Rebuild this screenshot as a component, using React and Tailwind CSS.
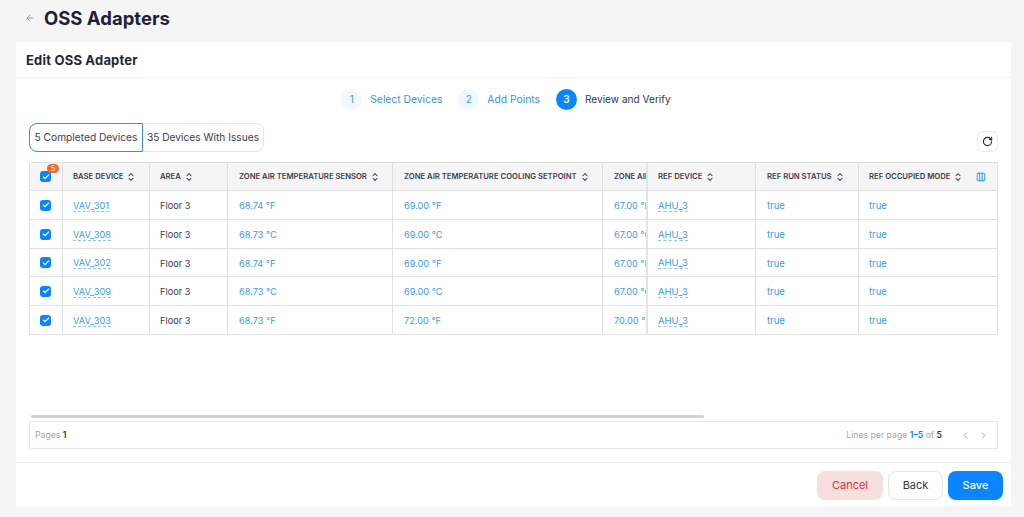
import React from "react";
import { ArrowLeft, ChevronsUpDown, RotateCw, Columns3, ChevronLeft, ChevronRight, Check } from "lucide-react";

const headers = [
  ["BASE DEVICE", "pl-[10px]"],
  ["AREA", "pl-[10px]"],
  ["ZONE AIR TEMPERATURE SENSOR", "pl-[11px]"],
  ["ZONE AIR TEMPERATURE COOLING SETPOINT", "pl-[11px]"],
  ["ZONE AIR TEMPERATURE HEATING SETPOINT", "pl-[11px]"],
  ["REF DEVICE", "pl-[10px]"],
  ["REF RUN STATUS", "pl-[11px]"],
  ["REF OCCUPIED MODE", "pl-[10px]"],
];
const rows = [
  ["VAV_301", "68.74 °F", "69.00 °F", "67.00 °F", "h-[29px]"],
  ["VAV_308", "68.73 °C", "69.00 °C", "67.00 °C", "h-[29px]"],
  ["VAV_302", "68.74 °F", "69.00 °F", "67.00 °F", "h-[28px]"],
  ["VAV_309", "68.73 °C", "69.00 °C", "67.00 °C", "h-[29px]"],
  ["VAV_303", "68.73 °F", "72.00 °F", "70.00 °F", "h-[29px]"],
];
const grid = "grid grid-cols-[33px_87px_78px_165px_210px_45px_108px_103px_138px]";

function Box({ children }) {
  return (
    <span className="relative flex h-[11px] w-[11px] items-center justify-center rounded-[3px] bg-[#0a84ff] text-white">
      <Check size={8} strokeWidth={3.5} />
      {children}
    </span>
  );
}

function Head({ label, pad, last, sep }) {
  return (
    <div className={`flex h-full items-center overflow-hidden whitespace-nowrap ${pad} ${last ? "" : sep ? "border-r-2 border-[#e4e4e4]" : "border-r border-[#dedede]"} text-[7.7px] font-semibold text-[#3a3d4d]`}>
      <span>{label}</span>
      <ChevronsUpDown size={10} strokeWidth={2.5} className="ml-[3px] shrink-0 text-[#3a3d4d]" />
      {last && <Columns3 size={10} className="ml-[13px] shrink-0 text-[#0a84ff]" />}
    </div>
  );
}

function Cell({ children, cls = "text-[#3b9be8]", pad = "pl-[11px]", last, sep, size = "text-[9.2px]" }) {
  return (
    <div className={`flex h-full items-center overflow-hidden whitespace-nowrap pt-[1px] leading-[11px] ${pad} ${last ? "" : sep ? "border-r-2 border-[#e4e4e4]" : "border-r border-[#e0e0e0]"} ${size} ${cls}`}>
      {children}
    </div>
  );
}

function Step({ n, label, active }) {
  return (
    <div className="flex items-center gap-[8px]">
      <span className={`flex h-[21px] w-[21px] items-center justify-center rounded-full text-[10px] ${active ? "bg-[#0a84ff] font-semibold text-white" : "bg-[#f1f7fd] text-[#3b9be8]"}`}>{n}</span>
      <span className={`${active ? "text-[10.1px] text-[#33364a]" : "text-[10.3px] text-[#3b8fe8]"}`}>{label}</span>
    </div>
  );
}

export default function App() {
  return (
    <div className="h-[517px] w-[1024px] overflow-hidden bg-[#f5f5f5] pl-[16px] font-['Inter',sans-serif]">
      <div className="flex h-[42px] items-center pb-[6px]">
        <ArrowLeft size={10} className="ml-[9px] text-[#8a8c96]" />
        <h1 className="ml-[9px] text-[18.5px] leading-none font-bold text-[#1d2238]">OSS Adapters</h1>
      </div>
      <div className="flex h-[464px] w-[995px] flex-col bg-white">
        <div className="flex h-[36px] shrink-0 items-center border-b border-[#f2f2f2] pt-[2px] pl-[10px] text-[13px] font-bold tracking-[0.2px] text-[#232738]">Edit OSS Adapter</div>
        <div className="flex h-[42px] shrink-0 items-center justify-center gap-[16px] pt-[1px] pr-[15px]">
          <Step n="1" label="Select Devices" />
          <Step n="2" label="Add Points" />
          <Step n="3" label="Review and Verify" active />
        </div>
        <div className="flex flex-1 flex-col px-[13px]">
          <div className="mt-[3px] flex h-[29px] shrink-0 items-center justify-between">
            <div className="flex h-full text-[10.2px] text-[#3a3d4d]">
              <div className="flex h-full w-[114px] items-center justify-center rounded-l-[8px] border-[1.5px] border-[#3a8fdc]">5 Completed Devices</div>
              <div className="flex h-full w-[121px] items-center justify-center rounded-r-[8px] border border-l-0 border-[#e6e6e6]">35 Devices With Issues</div>
            </div>
            <div className="mt-[8px] flex h-[21px] w-[21px] items-center justify-center rounded-[6px] border border-[#e8e8e8] text-[#2a2d3a]">
              <RotateCw size={11} strokeWidth={2.4} />
            </div>
          </div>
          <div className="mt-[10px] h-[173px] w-[969px] shrink-0 overflow-hidden border-t border-r border-l border-[#e0e0e0]">
            <div className={`${grid} h-[28px] items-center border-b border-[#e0e0e0] bg-[#f5f5f5]`}>
              <div className="flex h-full items-center justify-center border-r border-[#dedede] pr-[1px]">
                <Box>
                  <span className="absolute top-[-7px] left-[7px] flex h-[9px] w-[12px] items-center justify-center rounded-full bg-[#ee6c2e] text-[7.5px] leading-none text-white">5</span>
                </Box>
              </div>
              {headers.map(([h, p], i) => (
                <Head key={h} label={h} pad={p} sep={i === 4} last={i === headers.length - 1} />
              ))}
            </div>
            {rows.map(([d, a, b, c, h]) => (
              <div key={d} className={`${grid} ${h} items-center border-b border-[#e0e0e0]`}>
                <div className="flex h-full items-center justify-center border-r border-[#e0e0e0] pr-[1px]"><Box /></div>
                <Cell pad="pl-[10px]"><span className="border-b border-dashed border-[#8fc4f0]">{d}</span></Cell>
                <Cell pad="pl-[10px]" cls="text-[#3a3d4d]">Floor 3</Cell>
                <Cell>{a}</Cell>
                <Cell>{b}</Cell>
                <Cell sep>{c}</Cell>
                <Cell pad="pl-[10px]" size="text-[9.5px]"><span className="border-b border-dashed border-[#8fc4f0]">AHU_3</span></Cell>
                <Cell size="text-[9.5px]">true</Cell>
                <Cell pad="pl-[10px]" size="text-[9.5px]" last>true</Cell>
              </div>
            ))}
          </div>
          <div className="mt-[80px] ml-[2px] h-[3px] w-[673px] shrink-0 rounded-full bg-[#d2d3d6]" />
          <div className="mt-[3px] flex h-[28px] w-[969px] shrink-0 items-center justify-between border border-[#e8e8e8] pt-[2px] pr-[8px] pl-[5px] text-[8.7px] text-[#a3a5ad]">
            <div>Pages <span className="font-semibold text-[#33364a]">1</span></div>
            <div className="flex items-center">
              <span>Lines per page <b className="font-semibold text-[#0a84ff]">1–5</b> of <b className="font-semibold text-[#33364a]">5</b></span>
              <ChevronLeft size={11} className="ml-[18px]" />
              <ChevronRight size={11} className="ml-[7px]" />
            </div>
          </div>
        </div>
        <div className="flex h-[44px] shrink-0 items-center justify-end gap-[5px] border-t border-[#f0f0f0] pt-[1px] pr-[8px]">
          <button className="h-[29px] w-[66px] rounded-[8px] bg-[#f8dfdf] text-[11px] text-[#d9343a]">Cancel</button>
          <button className="h-[29px] w-[55px] rounded-[8px] border border-[#e5e5e5] text-[11px] text-[#33364a]">Back</button>
          <button className="h-[29px] w-[55px] rounded-[8px] bg-[#0a84ff] text-[11px] font-medium text-white">Save</button>
        </div>
      </div>
    </div>
  );
}
